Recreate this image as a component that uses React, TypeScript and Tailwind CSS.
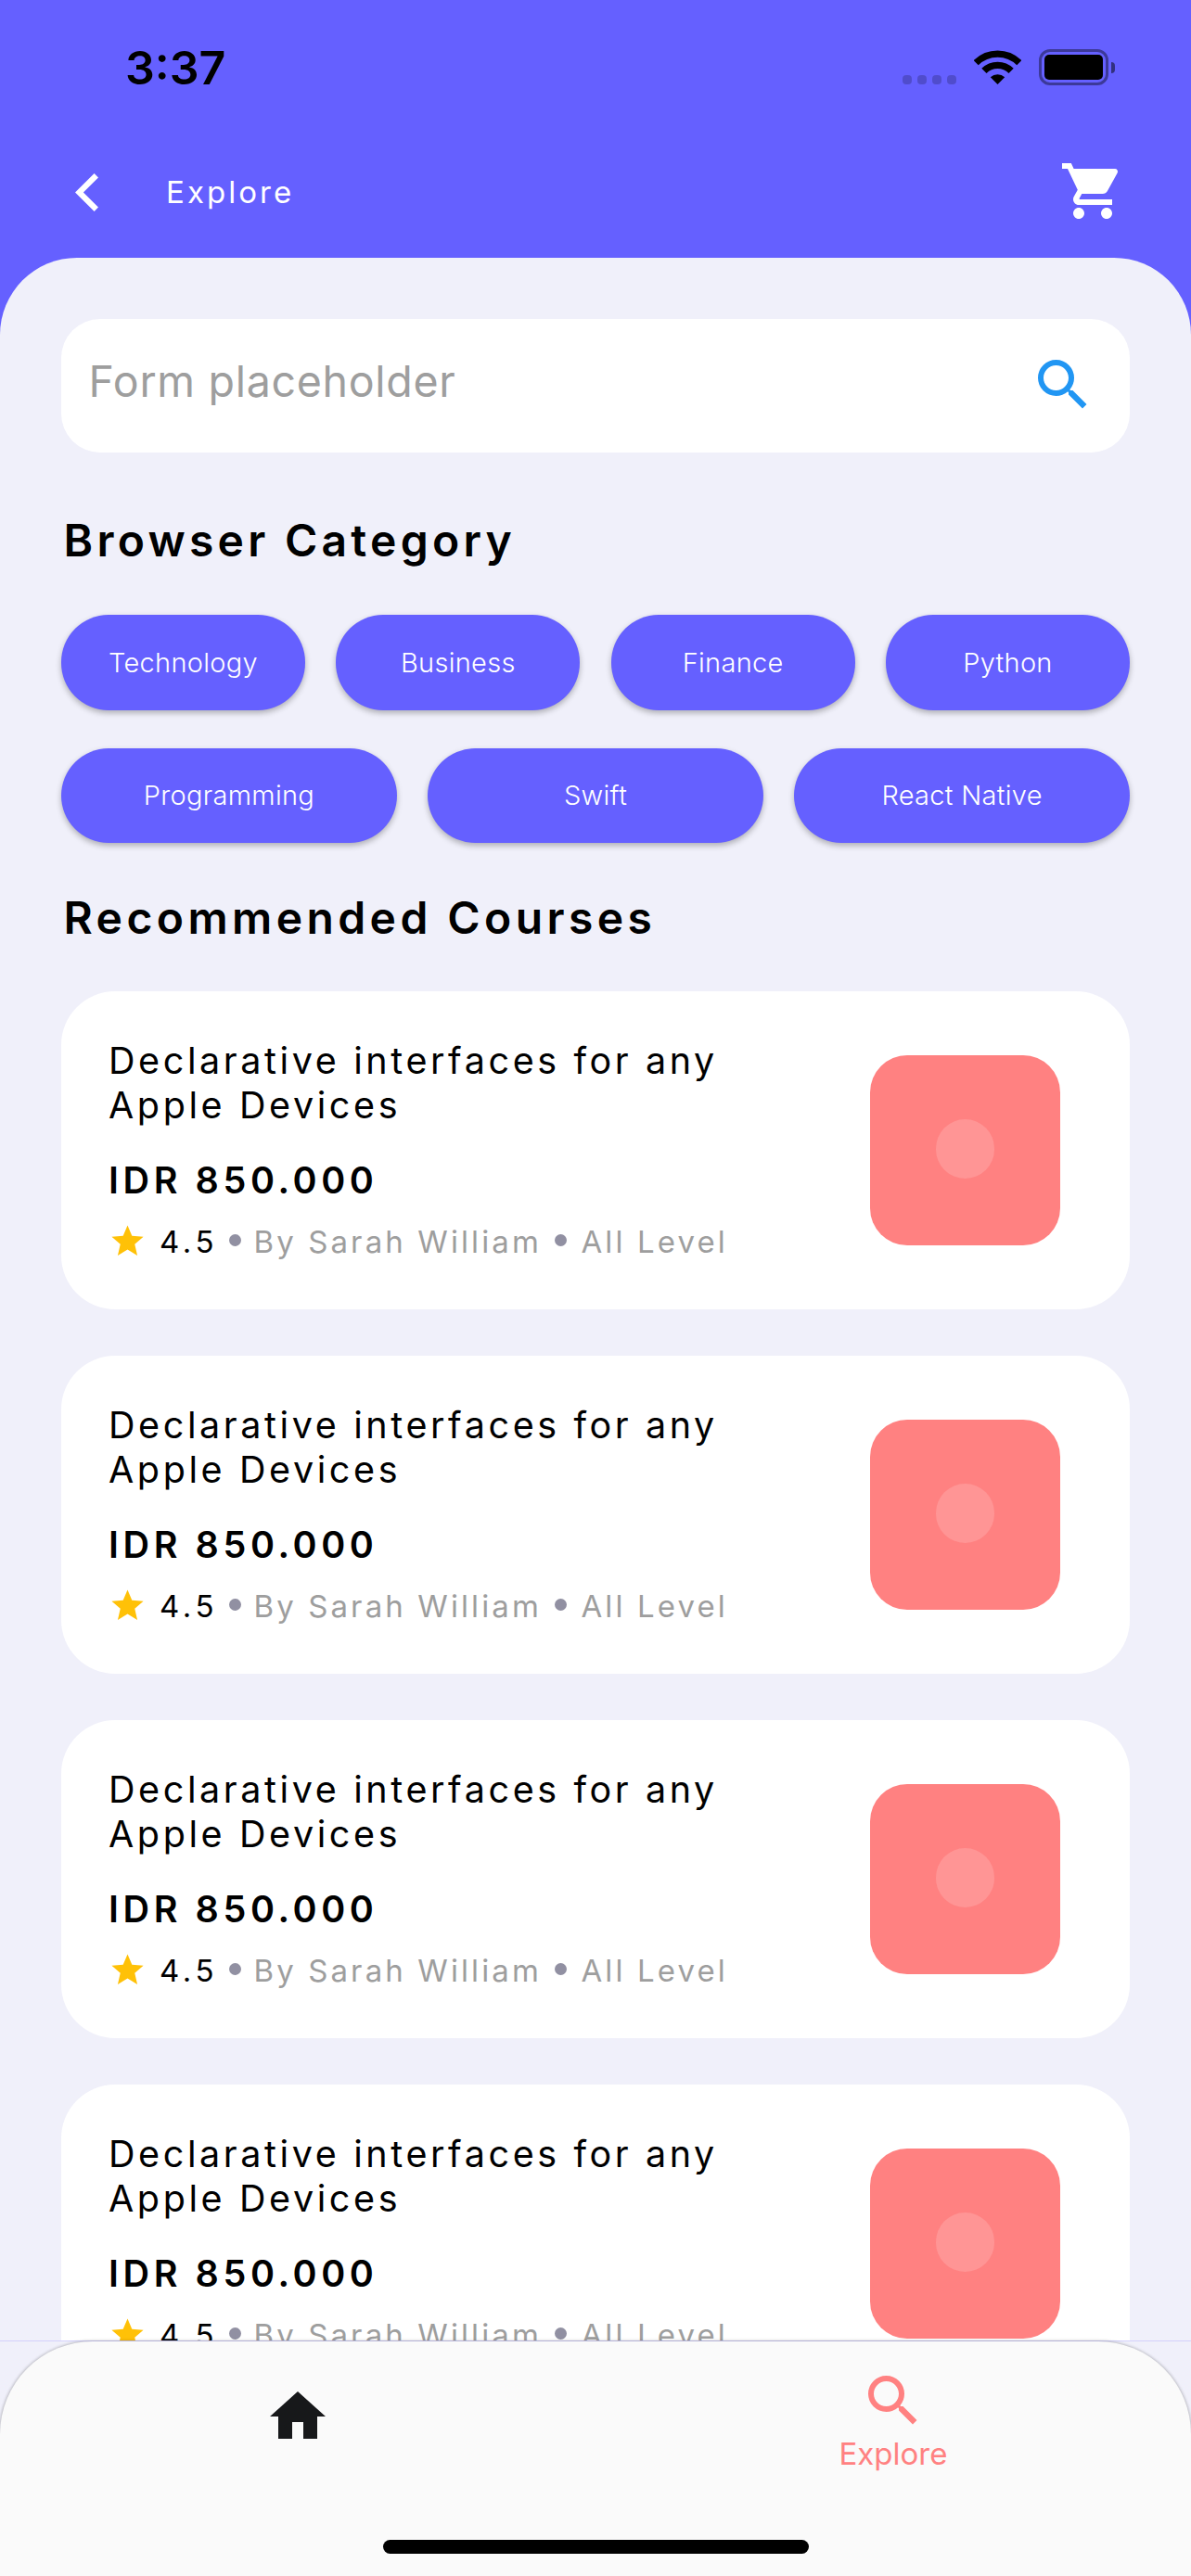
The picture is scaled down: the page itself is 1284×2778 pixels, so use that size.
import React from "react";
import { MdHome, MdSearch, MdShoppingCart, MdStar } from "react-icons/md";

const topCategories = ["Technology", "Business", "Finance", "Python"];
const bottomCategories = ["Programming", "Swift", "React Native"];

const courses = Array.from({ length: 4 }, (_, id) => ({
  id,
  title: "Declarative interfaces for any Apple Devices",
  price: "IDR 850.000",
  rating: "4.5",
  author: "By Sarah William",
  level: "All Level",
}));

function BackIcon() {
  return (
    <svg viewBox="0 0 25 41" className="h-[41px] w-[25px]" fill="none">
      <path d="M22.8 2.2L4.4 20.5L22.8 38.8" stroke="white" strokeWidth="6.2" />
    </svg>
  );
}

function WifiIcon() {
  return (
    <svg viewBox="0 0 51 37" className="h-[37px] w-[51px]" fill="none">
      <path d="M2.2 13.7A33 33 0 0 1 48.8 13.7" stroke="black" strokeWidth="7.2" />
      <path d="M10.9 22.4A20.7 20.7 0 0 1 40.1 22.4" stroke="black" strokeWidth="7.4" />
      <path d="M25.5 37L17.8 29.2A11.6 11.6 0 0 1 33.2 29.2Z" fill="black" />
    </svg>
  );
}

function BatteryIcon() {
  return (
    <div className="flex items-center gap-[3px]">
      <div className="h-[39px] w-[75px] rounded-[12px] border-[3px] border-black/40 p-[3px]">
        <div className="h-full w-full rounded-[5px] bg-black" />
      </div>
      <div className="h-[12px] w-[4px] rounded-r-full bg-black/50" />
    </div>
  );
}

function StatusBar() {
  return (
    <div className="flex h-[145px] items-center justify-between pr-[82px] pl-[135px]">
      <span className="text-[50px] leading-[60px] font-semibold text-black">3:37</span>
      <div className="flex items-center">
        <div className="mt-[27px] flex gap-[6px]">
          {[0, 1, 2, 3].map((dot) => (
            <div key={dot} className="size-[10px] rounded-[4px] bg-black/20" />
          ))}
        </div>
        <div className="mr-[19px] ml-[19px]">
          <WifiIcon />
        </div>
        <BatteryIcon />
      </div>
    </div>
  );
}

function Chip({ label }: { label: string }) {
  return (
    <button className="flex h-[102.5px] flex-1 items-center justify-center rounded-[51px] bg-[#6560ff] text-[29px] font-[350] tracking-[0.3px] text-white shadow-[0_3px_6px_rgba(0,0,0,0.28)]">
      {label}
    </button>
  );
}

function Dot() {
  return <div className="mb-[3px] size-[12.5px] rounded-full bg-[#9190a2]" />;
}

function CourseCard({ course }: { course: (typeof courses)[number] }) {
  return (
    <article className="flex h-[343px] shrink-0 items-start justify-between rounded-[58px] bg-white pr-[75px] pl-[51px]">
      <div className="flex flex-col pt-[51px]">
        <h3 className="w-[690px] text-[39.5px] leading-[48px] font-normal tracking-[3.6px] text-black">
          {course.title}
        </h3>
        <p className="mt-[33px] text-[39.5px] leading-[48px] font-semibold tracking-[4.6px] text-black">
          {course.price}
        </p>
        <div className="mt-[22px] flex h-[40px] items-center text-[33px] leading-[40px] font-normal tracking-[3.1px] whitespace-nowrap text-[#9e9e9e]">
          <MdStar className="mb-[2px] size-[41px] text-[#ffc107]" />
          <span className="ml-[14px] w-[75px] tracking-[4.6px] text-black">{course.rating}</span>
          <Dot />
          <span className="ml-[14px] w-[324.5px]">{course.author}</span>
          <Dot />
          <span className="ml-[16px]">{course.level}</span>
        </div>
      </div>
      <div className="mt-[69px] flex size-[205px] items-center justify-center rounded-[40px] bg-[#ff8181]">
        <div className="mb-[3px] size-[63.5px] rounded-full bg-[#ff9595]" />
      </div>
    </article>
  );
}

export default function App() {
  return (
    <div className="flex h-[2778px] w-[1284px] flex-col overflow-hidden bg-[#f0f0fa] font-['Inter',sans-serif]">
      <div className="flex min-h-0 flex-1 flex-col overflow-hidden bg-[linear-gradient(#6560ff_400px,#f0f0fa_400px)]">
        <StatusBar />
        <header className="mb-[9.5px] flex h-[123px] shrink-0 items-center pt-px pr-[70px] pl-[81px] text-white">
          <BackIcon />
          <span className="ml-[73px] flex-1 text-[33px] leading-[40px] tracking-[3.05px]">
            Explore
          </span>
          <MdShoppingCart className="mb-[2px] size-[72px]" />
        </header>
        <main className="flex min-h-0 flex-1 flex-col rounded-t-[83px] bg-[#f0f0fa] px-[66px] pt-[66px]">
          <div className="flex h-[144px] shrink-0 items-center justify-between rounded-[42px] bg-white pr-[36px] pl-[29.5px]">
            <span className="mb-[9px] text-[46.5px] leading-[56px] tracking-[0.7px] text-[#9e9e9e]">
              Form placeholder
            </span>
            <MdSearch className="mb-px size-[72px] text-[#2196f3]" />
          </div>
          <h2 className="mt-[66px] mb-px pl-[2.5px] text-[48px] leading-[58px] font-semibold tracking-[4.26px] text-black">
            Browser Category
          </h2>
          <div className="mt-[50.5px] flex shrink-0 gap-[33.3px]">
            {topCategories.map((label) => (
              <Chip key={label} label={label} />
            ))}
          </div>
          <div className="mt-[41px] flex shrink-0 gap-[33.3px]">
            {bottomCategories.map((label) => (
              <Chip key={label} label={label} />
            ))}
          </div>
          <h2 className="mt-[51.5px] mb-px pl-[2.5px] text-[48px] leading-[58px] font-semibold tracking-[4.41px] text-black">
            Recommended Courses
          </h2>
          <div className="mt-[49.5px] flex min-h-0 flex-1 flex-col gap-[50px]">
            {courses.map((course) => (
              <CourseCard key={course.id} course={course} />
            ))}
          </div>
        </main>
      </div>
      <div className="relative h-[254px] shrink-0 border-t border-[#d3d0fb] bg-[#f0f0fa]">
        <nav className="-mt-[0.5px] flex h-[254px] rounded-t-[100px] bg-[#fafafa] shadow-[0_0_3px_1px_rgba(0,0,0,0.22)]">
          <button className="flex flex-1 flex-col items-center pt-[45.5px] text-[#17181a]">
            <MdHome className="size-[72px]" />
          </button>
          <button className="flex flex-1 flex-col items-center pt-[28.5px] text-[33px] leading-[40px] text-[#ff8181]">
            <MdSearch className="mb-px size-[72px]" />
            Explore
          </button>
        </nav>
        <div className="absolute bottom-[24px] left-[413px] h-[15px] w-[459px] rounded-full bg-black" />
      </div>
    </div>
  );
}
